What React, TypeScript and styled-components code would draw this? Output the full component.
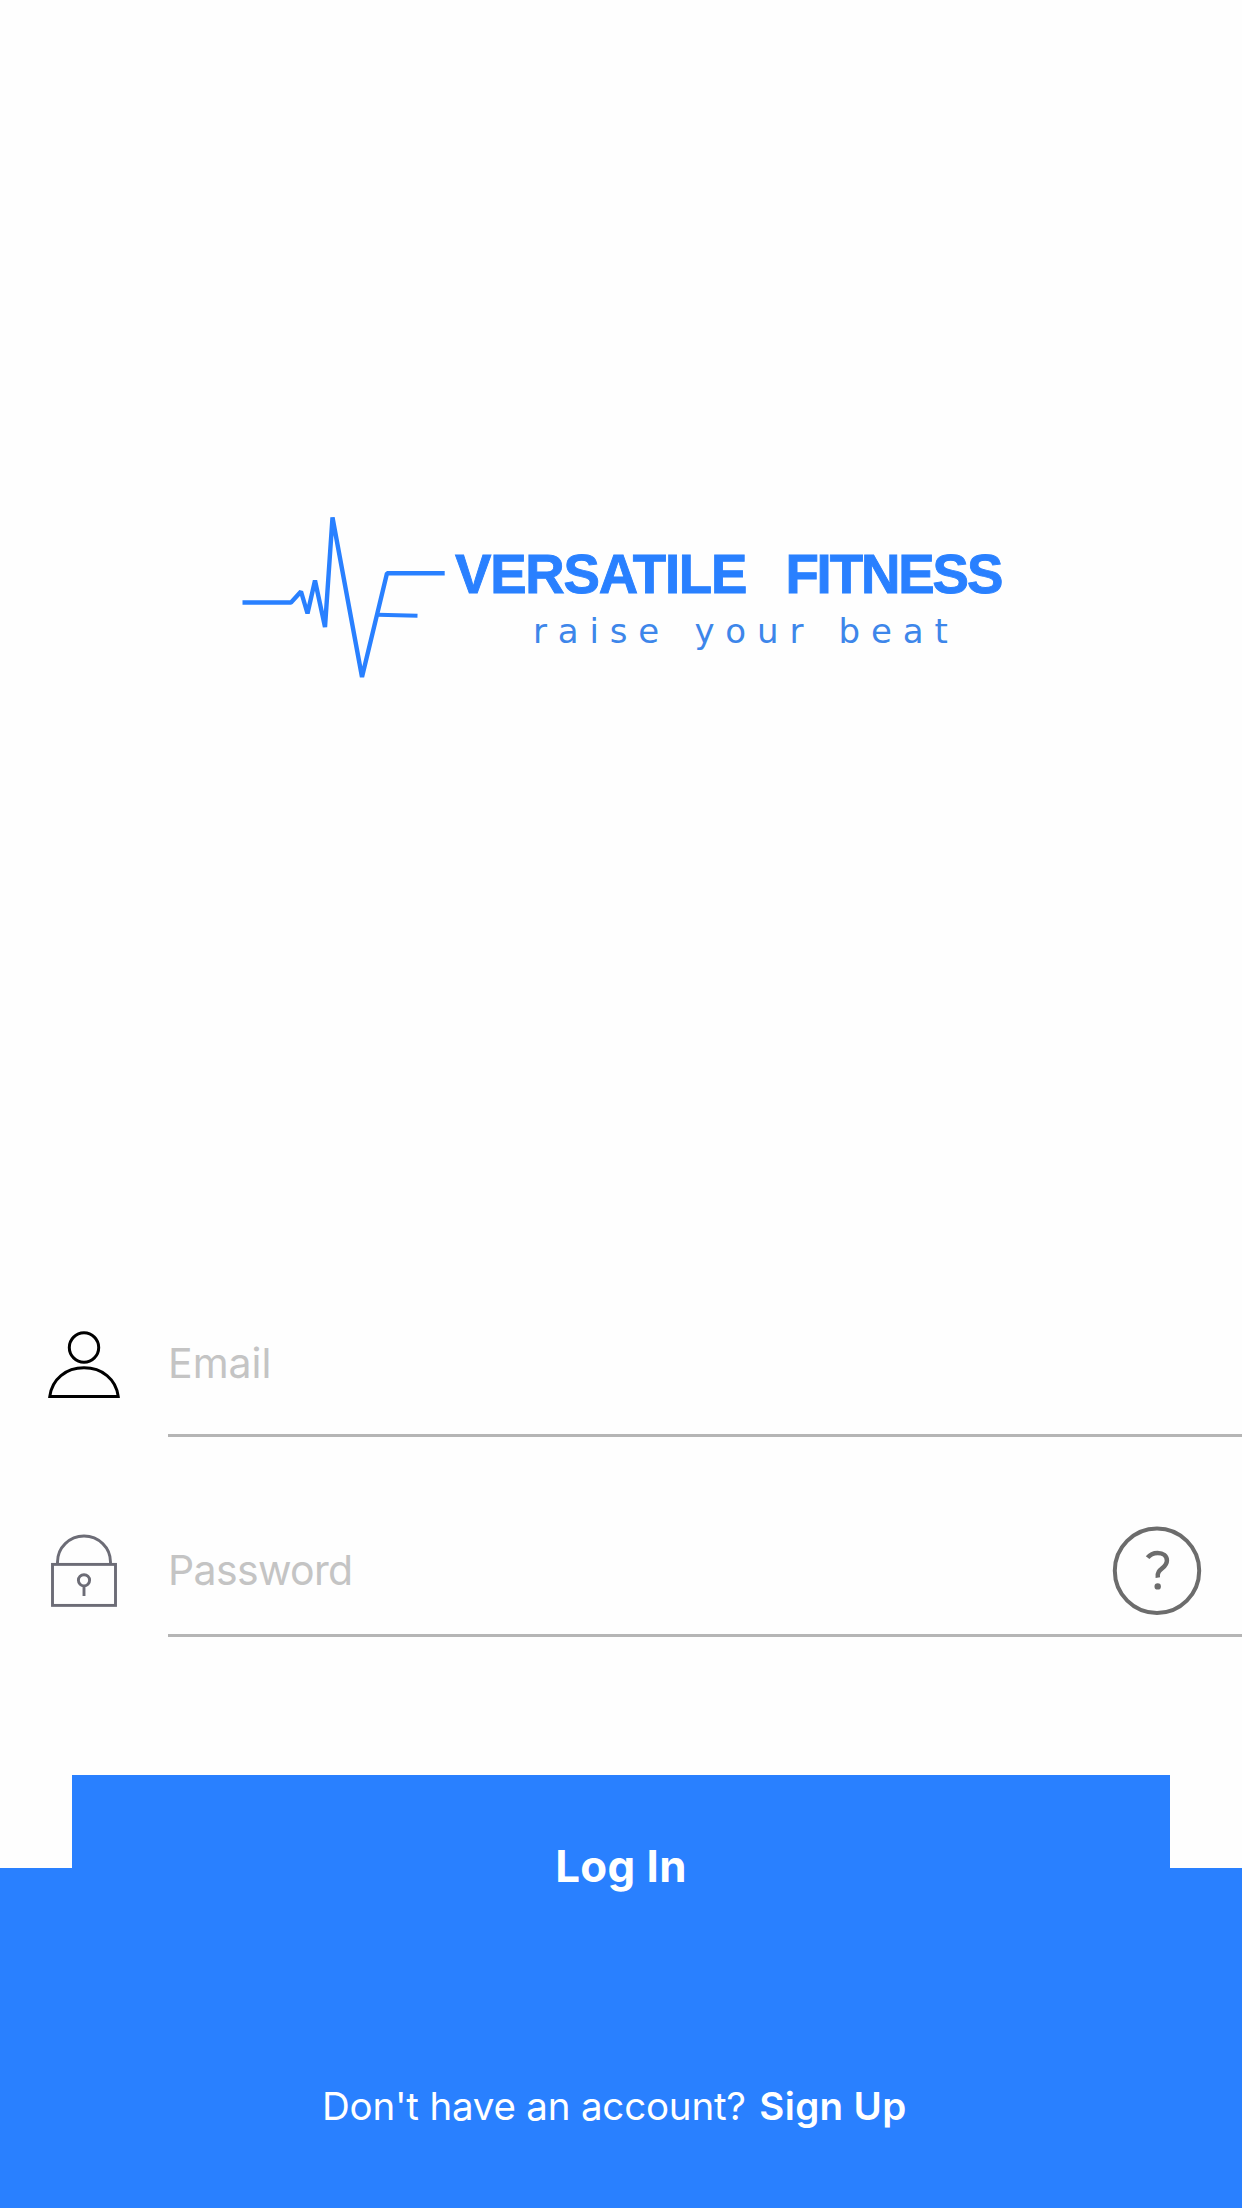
import React from "react";
import styled, { createGlobalStyle } from "styled-components";

const blue = "#2980ff";

const GlobalStyle = createGlobalStyle`
  body { margin: 0; background: #fefefe; }
  *, *::before, *::after { box-sizing: border-box; }
`;

const Screen = styled.main`
  display: flex;
  flex-direction: column;
  width: 1242px;
  height: 2208px;
  overflow: hidden;
  background: #fefefe;
  font-family: Inter, "Liberation Sans", sans-serif;
`;

const Hero = styled.header`
  display: flex;
  align-items: flex-start;
  height: 1302px;
  padding: 510px 0 0 236px;
`;

const Pulse = styled.svg`
  flex: none;
  width: 219px;
  height: 176px;
`;

const Brand = styled.div`
  display: flex;
  flex-direction: column;
  padding-top: 35px;
  white-space: pre;
`;

const BrandName = styled.h1`
  display: flex;
  gap: 39.3px;
  margin: 0;
  font: bold 54.6px/60px "Liberation Sans", Arial, sans-serif;
  color: ${blue};
  -webkit-text-stroke: 0.9px ${blue};
`;

const Word = styled.span<{ $spacing: number }>`
  letter-spacing: ${(p) => p.$spacing}px;
`;

const Tagline = styled.p`
  margin: 4px 0 0 78px;
  font: 34px/44px "DejaVu Sans", Verdana, sans-serif;
  letter-spacing: 10.85px;
  word-spacing: 2.6px;
  color: #3d86ea;
`;

const Field = styled.label<{ $height: number }>`
  display: grid;
  grid-template-columns: 168px 1fr;
  height: ${(p) => p.$height}px;
`;

const IconCell = styled.span<{ $top: number }>`
  padding: ${(p) => p.$top}px 0 0 46px;
`;

const FieldIcon = styled.svg`
  display: block;
  width: 76px;
  height: 76px;
  fill: none;
`;

const FieldBody = styled.span<{ $textTop: number }>`
  display: flex;
  justify-content: space-between;
  align-items: flex-start;
  padding-top: ${(p) => p.$textTop}px;
  border-bottom: 3px solid #b5b5b5;
`;

const Input = styled.input<{ $spacing: number }>`
  flex: 1;
  min-width: 0;
  height: 50px;
  padding: 0;
  border: 0;
  outline: 0;
  background: transparent;
  font: 400 41px/50px Inter, sans-serif;
  letter-spacing: ${(p) => p.$spacing}px;
  &::placeholder { color: #c4c4c4; opacity: 1; }
`;

const HelpButton = styled.button`
  flex: none;
  width: 90px;
  height: 90px;
  margin: -19px 40px 0 0;
  padding: 0;
  border: 0;
  background: transparent;
  svg { display: block; }
`;

const Footer = styled.footer`
  display: flex;
  flex-direction: column;
  align-items: center;
  height: 340px;
  margin-top: 231px;
  background: ${blue};
`;

const LoginButton = styled.button`
  flex: none;
  width: 1098px;
  height: 184px;
  margin-top: -93px;
  padding: 0;
  border: 0;
  background: ${blue};
  color: #fff;
  font: 700 43.8px/184px Inter, sans-serif;
  letter-spacing: 0.4px;
`;

const SignUpRow = styled.p`
  display: flex;
  gap: 13.5px;
  width: 100%;
  margin: 122px 0 0;
  padding-left: 322px;
  color: #fff;
  font-size: 38.5px;
  line-height: 50px;
  white-space: pre;
`;

const Prompt = styled.span`
  letter-spacing: -0.2px;
  font-weight: 400;
`;

const SignUpLink = styled.a`
  font-weight: 600;
  letter-spacing: 0.35px;
`;

export default function App() {
  return (
    <>
      <GlobalStyle />
      <Screen>
        <Hero>
          <Pulse viewBox="236 510 219 176" fill="none" stroke={blue} aria-hidden="true">
            <path
              d="M242.5 602.5H291L301 591.5L307.5 613.5L315 580.5L325 627L332.5 517.5L362 677L387 573.3H444.7"
              strokeWidth="4.4"
              strokeLinejoin="bevel"
            />
            <path d="M378 614.8L417.5 615.8" strokeWidth="4" />
          </Pulse>
          <Brand>
            <BrandName>
              <Word $spacing={-1.25}>VERSATILE</Word>
              <Word $spacing={-2.1}>FITNESS</Word>
            </BrandName>
            <Tagline>raise your beat</Tagline>
          </Brand>
        </Hero>

        <Field $height={135}>
          <IconCell $top={24}>
            <FieldIcon viewBox="46 1326 76 76" stroke="#000" strokeWidth="3">
              <circle cx="84" cy="1347.5" r="14.7" />
              <path d="M49.8 1396.4C52 1379 66 1367.8 84 1367.8C102 1367.8 116 1379 118.2 1396.4Z" />
            </FieldIcon>
          </IconCell>
          <FieldBody $textTop={36}>
            <Input $spacing={0} placeholder="Email" aria-label="Email" />
          </FieldBody>
        </Field>

        <Field $height={200}>
          <IconCell $top={95}>
            <FieldIcon viewBox="46 1532 76 76" stroke="#6c6c76" strokeWidth="2.9">
              <path d="M57.5 1564V1562A26.5 26 0 0 1 110.5 1562V1564" />
              <rect x="52.5" y="1564.4" width="63" height="41" />
              <circle cx="84" cy="1580.3" r="5.6" />
              <path d="M84 1586V1596" />
            </FieldIcon>
          </IconCell>
          <FieldBody $textTop={108}>
            <Input $spacing={-0.65} type="password" placeholder="Password" aria-label="Password" />
            <HelpButton type="button" aria-label="Password help">
              <svg width="90" height="90" viewBox="1112 1525.5 90 90" fill="none" stroke="#6c6c6c">
                <circle cx="1157" cy="1570.3" r="42.2" strokeWidth="4" />
                <path
                  d="M1147.6 1557.2C1150 1554 1153.5 1552.4 1157.6 1552.4C1163.2 1552.4 1166.9 1555.4 1166.9 1560C1166.9 1568.6 1156.2 1567.6 1157.8 1577.2"
                  strokeWidth="4.5"
                />
                <circle cx="1157.7" cy="1585.9" r="3.2" fill="#6c6c6c" stroke="none" />
              </svg>
            </HelpButton>
          </FieldBody>
        </Field>

        <Footer>
          <LoginButton type="button">Log In</LoginButton>
          <SignUpRow>
            <Prompt>Don't have an account?</Prompt>
            <SignUpLink>Sign Up</SignUpLink>
          </SignUpRow>
        </Footer>
      </Screen>
    </>
  );
}
